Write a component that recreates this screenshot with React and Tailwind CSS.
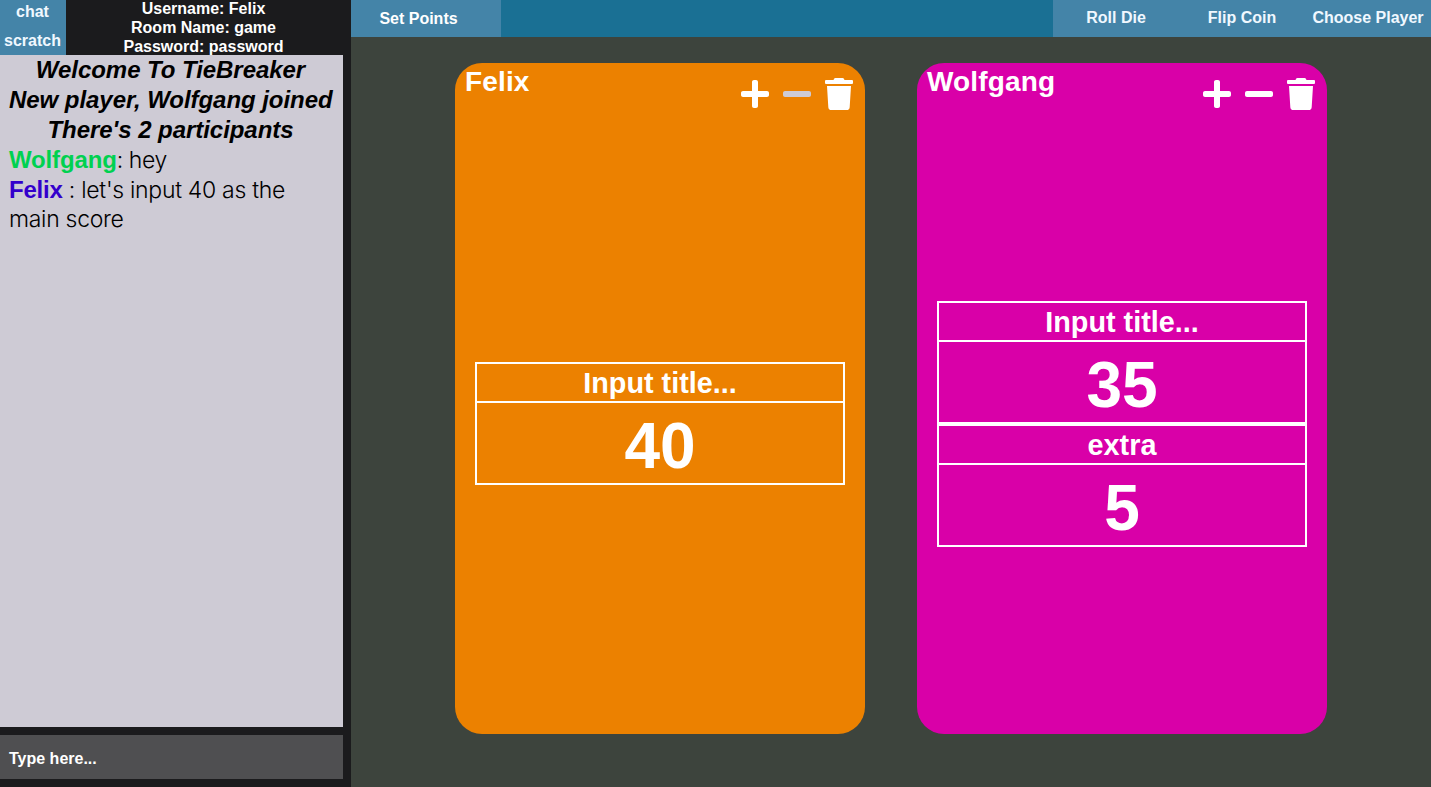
import { FaPlus, FaMinus, FaTrash } from "react-icons/fa";

function Score({ title, value }) {
  return (
    <div className="h-[123px] w-full border-2 border-white text-center">
      <div className="h-[39px] border-b-2 border-white text-[28.8px] leading-[39px]">{title}</div>
      <div className="text-[64px] leading-[86px]">{value}</div>
    </div>
  );
}

function PlayerCard({ name, color, minusColor, scores }) {
  return (
    <section className={`flex h-[671px] w-[410px] flex-col rounded-[27px] ${color}`}>
      <header className="flex h-[60px] shrink-0 justify-between pl-[10px] pr-3">
        <h2 className="text-[28px] leading-[37px] tracking-[0.15px]">{name}</h2>
        <div className="flex gap-[14px] pt-[15px]">
          <FaPlus className="h-8 w-7" />
          <FaMinus className={`h-8 w-7 ${minusColor}`} />
          <FaTrash className="h-8 w-7" />
        </div>
      </header>
      <div className="flex flex-1 flex-col justify-center px-5 pb-[9.5px]">
        {scores.map((s) => (
          <Score key={s.title} {...s} />
        ))}
      </div>
    </section>
  );
}

export default function App() {
  return (
    <div className="flex h-[787px] w-full overflow-hidden bg-[#3d443d] font-['Liberation_Sans',sans-serif] font-bold text-white">
      <aside className="flex w-[351px] shrink-0 flex-col bg-[#1b1b1d] pr-2">
        <div className="flex h-[55px]">
          <nav className="flex w-[66px] flex-col bg-[#4484a8] pr-px text-center text-base text-[#f0f8ff]">
            <button className="h-[25px] pb-[2px] leading-[22px]">chat</button>
            <button className="h-[30px] leading-[31px]">scratch</button>
          </nav>
          <div className="flex-1 overflow-hidden pr-[2px] text-center text-base leading-[19px]">
            <p className="-mt-px">Username: Felix</p>
            <p>Room Name: game</p>
            <p>Password: password</p>
          </div>
        </div>
        <div className="flex-1 bg-[#cecbd5] pl-[9px] pr-[9px] text-2xl leading-[30px] text-black">
          <div className="whitespace-nowrap pr-[2px] text-center italic tracking-[-0.05px]">
            <p>Welcome To TieBreaker</p>
            <p>New player, Wolfgang joined</p>
            <p>There's 2 participants</p>
          </div>
          <p>
            <span className="text-[#00d150] tracking-[-0.15px]">Wolfgang</span>
            <span className="font-['Inter',sans-serif] text-[23px] font-light leading-none tracking-[-0.4px]">: hey</span>
          </p>
          <p className="-mt-[0.5px] pr-5 leading-[29px]">
            <span className="text-[#3300cc] tracking-[-0.2px]">Felix</span>
            <span className="font-['Inter',sans-serif] text-[23px] font-light leading-none tracking-[-0.3px]"> : let's input 40 as the main score</span>
          </p>
        </div>
        <div className="my-2 flex h-[44px] items-center bg-[#4f4f51] pl-[9px] pt-[3px] text-base">Type here...</div>
      </aside>
      <main className="flex flex-1 flex-col">
        <div className="flex h-[37px] justify-between bg-[#1a7094] text-base">
          <button className="w-[150px] bg-[#4484a8] pr-[15px]">Set Points</button>
          <div className="flex w-[378px] bg-[#4484a8] text-[#f0f8ff]">
            <button className="w-[126px] pb-[2px]">Roll Die</button>
            <button className="w-[126px] pb-[2px]">Flip Coin</button>
            <button className="w-[126px] whitespace-nowrap pb-[2px]">Choose Player</button>
          </div>
        </div>
        <div className="flex gap-[52px] pl-[104px] pt-[26px]">
          <PlayerCard name="Felix" color="bg-[#ec8100]" minusColor="text-[#cecbd5]" scores={[{ title: "Input title...", value: 40 }]} />
          <PlayerCard
            name="Wolfgang"
            color="bg-[#d900a8]"
            minusColor="text-white"
            scores={[
              { title: "Input title...", value: 35 },
              { title: "extra", value: 5 },
            ]}
          />
        </div>
      </main>
    </div>
  );
}
